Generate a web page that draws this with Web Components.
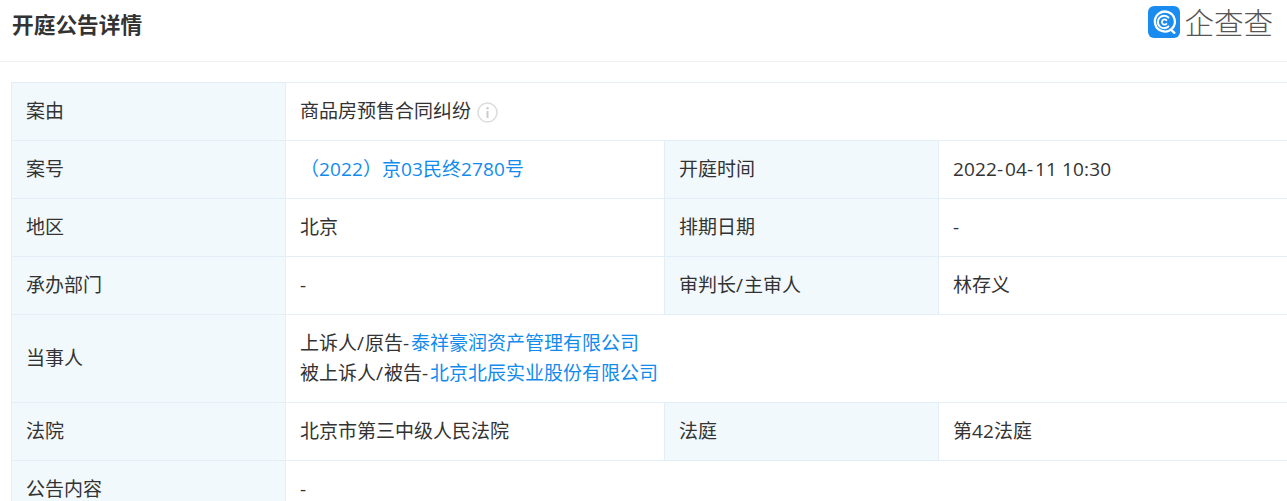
<!DOCTYPE html>
<html>
<head>
<meta charset="utf-8">
<style>
  html, body { margin: 0; padding: 0; background: #fff; overflow: hidden; height: 501px; }
  body { font-family: "Open Sans", "Noto Sans CJK SC", sans-serif; color: #333; }
</style>
</head>
<body>
<qcc-page>
  <qcc-header slot="header" title="开庭公告详情"></qcc-header>
  <qcc-table>
    <qcc-row style="--h:58px">
      <qcc-label>案由</qcc-label>
      <qcc-value span>商品房预售合同纠纷<qcc-info></qcc-info></qcc-value>
    </qcc-row>
    <qcc-row style="--h:58px">
      <qcc-label>案号</qcc-label>
      <qcc-value><qcc-link>（<qcc-num>2022</qcc-num>）京<qcc-num>03</qcc-num>民终<qcc-num>2780</qcc-num>号</qcc-link></qcc-value>
      <qcc-label second>开庭时间</qcc-label>
      <qcc-value><qcc-num>2022</qcc-num><qcc-num sep>-</qcc-num><qcc-num>04</qcc-num><qcc-num sep>-</qcc-num><qcc-num>11 10:30</qcc-num></qcc-value>
    </qcc-row>
    <qcc-row style="--h:58px">
      <qcc-label>地区</qcc-label>
      <qcc-value>北京</qcc-value>
      <qcc-label second>排期日期</qcc-label>
      <qcc-value><qcc-num sep>-</qcc-num></qcc-value>
    </qcc-row>
    <qcc-row style="--h:58px">
      <qcc-label>承办部门</qcc-label>
      <qcc-value><qcc-num sep>-</qcc-num></qcc-value>
      <qcc-label second>审判长<qcc-num slash>/</qcc-num>主审人</qcc-label>
      <qcc-value>林存义</qcc-value>
    </qcc-row>
    <qcc-row style="--h:88px">
      <qcc-label>当事人</qcc-label>
      <qcc-value span>
        <div>上诉人<qcc-num slash>/</qcc-num>原告<qcc-num sep>-</qcc-num><qcc-link>泰祥豪润资产管理有限公司</qcc-link></div>
        <div>被上诉人<qcc-num slash>/</qcc-num>被告<qcc-num sep>-</qcc-num><qcc-link>北京北辰实业股份有限公司</qcc-link></div>
      </qcc-value>
    </qcc-row>
    <qcc-row style="--h:58px">
      <qcc-label>法院</qcc-label>
      <qcc-value>北京市第三中级人民法院</qcc-value>
      <qcc-label second>法庭</qcc-label>
      <qcc-value>第<qcc-num>42</qcc-num>法庭</qcc-value>
    </qcc-row>
    <qcc-row style="--h:58px">
      <qcc-label>公告内容</qcc-label>
      <qcc-value span><qcc-num sep>-</qcc-num></qcc-value>
    </qcc-row>
  </qcc-table>
</qcc-page>
<script>
function define(name, css, html, setup) {
  customElements.define(name, class extends HTMLElement {
    constructor() {
      super()
      this.attachShadow({ mode: 'open' })
      this.shadowRoot.innerHTML = `<style>${css}</style>${html}`
      if (setup) setup(this)
    }
  })
}

define('qcc-page', `:host{display:block}`, `<slot name="header"></slot><slot></slot>`)

define('qcc-header', `
  :host{display:flex;align-items:center;justify-content:space-between;height:62px;box-sizing:border-box;padding:0 14px 11px 12px;border-bottom:1px solid #eef0f3}
  h1{margin:0;font-size:21.7px;line-height:30px;font-weight:700;color:#333}
  .logo{display:flex;align-items:center;gap:4.5px;margin-top:-6px}
  .name{font-size:29.5px;line-height:32px;font-weight:300;color:#555;margin-top:2px}
  svg{display:block}
`, `
  <h1></h1>
  <div class="logo">
    <svg width="32" height="32" viewBox="0 0 32 32">
      <rect width="32" height="32" rx="6" fill="#1a8cf0"/>
      <path d="M24.2 22.4A10 10 0 1 0 21.6 24.4" fill="none" stroke="#fff" stroke-width="2.3" stroke-linecap="round"/>
      <path d="M22.6 23.4l3.8 3.4" fill="none" stroke="#fff" stroke-width="2.4" stroke-linecap="round"/>
      <path d="M20.4 11.6A6.2 6.2 0 1 0 20.4 20.4" fill="none" stroke="#fff" stroke-width="2.1" stroke-linecap="round"/>
      <path d="M18.4 14.2A2.6 2.6 0 1 0 18.4 17.8" fill="none" stroke="#fff" stroke-width="1.8" stroke-linecap="round"/>
    </svg>
    <span class="name">企查查</span>
  </div>
`, el => { el.shadowRoot.querySelector('h1').textContent = el.getAttribute('title') })

define('qcc-table', `
  :host{display:block;margin:20px 0 0 11px;border:1px solid #e4eef6;border-width:1px 0 0 1px}
`, `<slot></slot>`)

define('qcc-row', `
  :host{display:grid;grid-template-columns:274px 378px 275px 1fr;height:var(--h);box-sizing:border-box;border-bottom:1px solid #e4eef6}
`, `<slot></slot>`)

define('qcc-label', `
  :host{display:flex;align-items:center;padding:0 14px 2px;background:#f2f9fc;border-right:1px solid #e4eef6;font-size:19px;line-height:30px;color:#333;white-space:nowrap}
  :host([second]){border-left:1px solid #e4eef6}
`, `<span><slot></slot></span>`)

define('qcc-value', `
  :host{display:block;align-self:center;padding:0 14px 2px;font-size:19px;line-height:30px;color:#333;white-space:nowrap}
  :host([span]){grid-column:2 / 5}
`, `<slot></slot>`)

define('qcc-link', `:host{color:#128bed}`, `<slot></slot>`)

// latin runs: the reference font has wider digits and separators than Open Sans
define('qcc-num', `
  :host{letter-spacing:.13px}
  :host([sep]){letter-spacing:1.9px}
  :host([slash]){letter-spacing:1px}
`, `<slot></slot>`)

define('qcc-info', `
  :host{display:inline-block;vertical-align:-5px;margin-left:6px;width:21px;height:21px}
  svg{display:block}
`, `<svg width="21" height="21" viewBox="0 0 21 21">
  <circle cx="10.5" cy="10.5" r="9.5" fill="none" stroke="#ddd" stroke-width="1.6"/>
  <circle cx="10.5" cy="6.3" r="1.2" fill="#ccc"/>
  <rect x="9.5" y="9" width="2" height="7" fill="#ccc"/>
</svg>`)
</script>
</body>
</html>
